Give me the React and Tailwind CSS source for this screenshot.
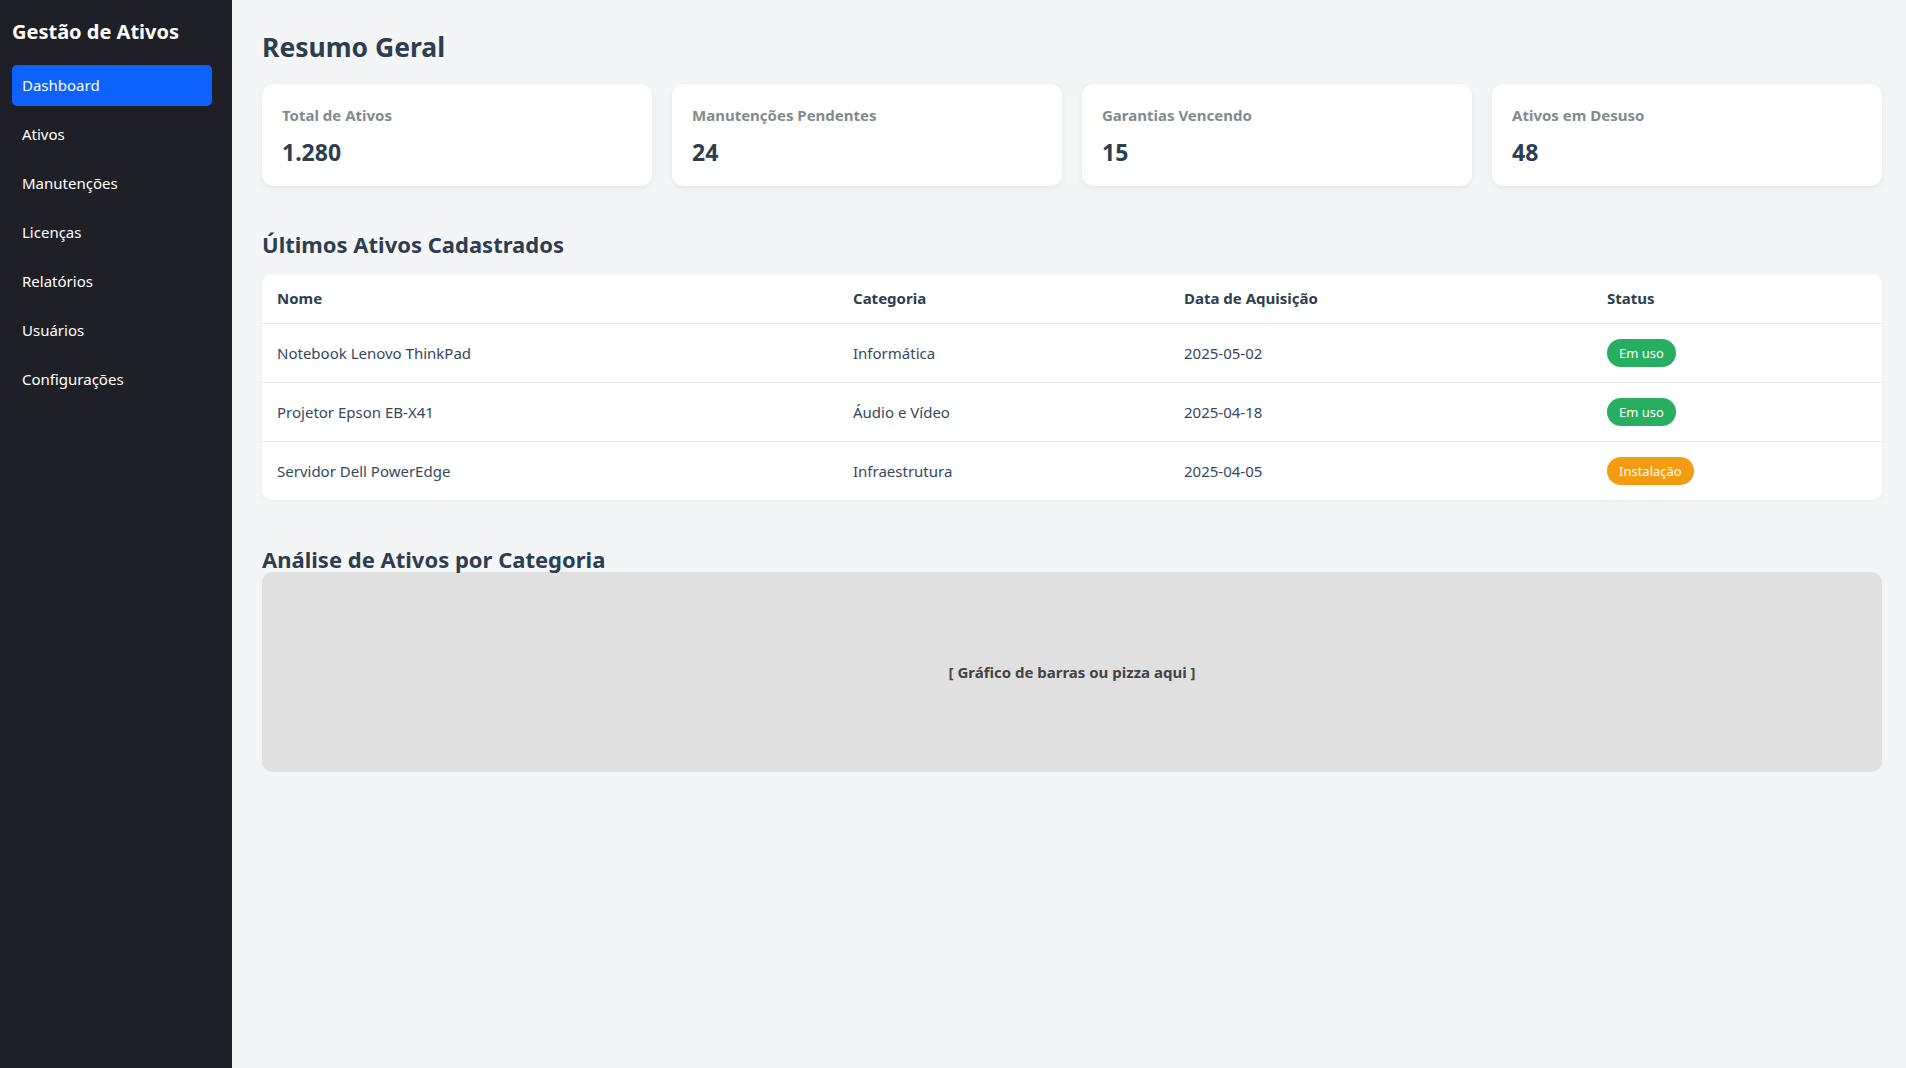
const navItems = [
  "Dashboard",
  "Ativos",
  "Manutenções",
  "Licenças",
  "Relatórios",
  "Usuários",
  "Configurações",
];

const stats = [
  { label: "Total de Ativos", value: "1.280" },
  { label: "Manutenções Pendentes", value: "24" },
  { label: "Garantias Vencendo", value: "15" },
  { label: "Ativos em Desuso", value: "48" },
];

const assets = [
  { nome: "Notebook Lenovo ThinkPad", categoria: "Informática", data: "2025-05-02", status: "Em uso" },
  { nome: "Projetor Epson EB-X41", categoria: "Áudio e Vídeo", data: "2025-04-18", status: "Em uso" },
  { nome: "Servidor Dell PowerEdge", categoria: "Infraestrutura", data: "2025-04-05", status: "Instalação" },
];

function StatusBadge({ status }) {
  const color = status === "Em uso" ? "bg-[#27ae60]" : "bg-[#f39c12]";
  return (
    <span className={`inline-block rounded-full px-[12px] py-[5px] align-middle text-[13px] leading-[18px] text-white ${color}`}>
      {status}
    </span>
  );
}

export default function App() {
  return (
    <div className="flex min-h-screen bg-[#f4f5f7] font-['Noto_Sans',sans-serif]">
      <aside className="w-[232px] shrink-0 bg-[#1f2027] pl-[12px] pt-[20px] text-white">
        <h1 className="mb-[21px] text-[20px] font-bold leading-[24px]">Gestão de Ativos</h1>
        <nav className="flex flex-col gap-[8px]">
          {navItems.map((item, i) => (
            <a
              key={item}
              href="#"
              className={`block w-[200px] rounded-[5px] px-[10px] py-[10px] text-[15px] leading-[21px] ${
                i === 0 ? "bg-[#0d62fd]" : ""
              }`}
            >
              {item}
            </a>
          ))}
        </nav>
      </aside>

      <main className="flex-1 pb-[30px] pl-[30px] pr-[24px] pt-[30px] text-[#2c3e50]">
        <h2 className="mb-[20px] text-[26.5px] font-bold leading-[34px]">Resumo Geral</h2>
        <div className="grid grid-cols-4 gap-[20px]">
          {stats.map((s) => (
            <div
              key={s.label}
              className="h-[102px] rounded-[12px] bg-white px-[20px] pt-[21px] shadow-[0_2px_6px_rgba(0,0,0,0.06)]"
            >
              <div className="text-[15px] font-bold leading-[20px] text-[#7f8c8d]">{s.label}</div>
              <div className="mt-[12px] text-[23px] font-bold leading-[30px]">{s.value}</div>
            </div>
          ))}
        </div>

        <h2 className="mb-[17px] mt-[45px] text-[22px] font-bold leading-[26px]">Últimos Ativos Cadastrados</h2>
        <div className="overflow-hidden rounded-[10px] bg-white shadow-[0_1px_4px_rgba(0,0,0,0.05)]">
          <table className="w-full border-collapse text-left text-[15px] leading-[19px]">
            <colgroup>
              <col className="w-[576px]" />
              <col className="w-[331px]" />
              <col className="w-[423px]" />
              <col />
            </colgroup>
            <thead>
              <tr className="border-b border-[#e8e8e8]">
                <th className="p-[15px] font-bold">Nome</th>
                <th className="p-[15px] font-bold">Categoria</th>
                <th className="p-[15px] font-bold">Data de Aquisição</th>
                <th className="p-[15px] font-bold">Status</th>
              </tr>
            </thead>
            <tbody className="text-[#34495e]">
              {assets.map((a, i) => (
                <tr key={a.nome} className={i < assets.length - 1 ? "border-b border-[#e8e8e8]" : ""}>
                  <td className="px-[15px] py-[15px]">{a.nome}</td>
                  <td className="px-[15px] py-[15px]">{a.categoria}</td>
                  <td className="px-[15px] py-[15px]">{a.data}</td>
                  <td className="px-[15px] py-[15px]">
                    <StatusBadge status={a.status} />
                  </td>
                </tr>
              ))}
            </tbody>
          </table>
        </div>

        <h2 className="mt-[46px] text-[22px] font-bold leading-[26px]">Análise de Ativos por Categoria</h2>
        <div className="flex h-[200px] items-center justify-center rounded-[10px] bg-[#e0e0e0] text-[15px] font-bold text-[#444]">
          [ Gráfico de barras ou pizza aqui ]
        </div>
      </main>
    </div>
  );
}
